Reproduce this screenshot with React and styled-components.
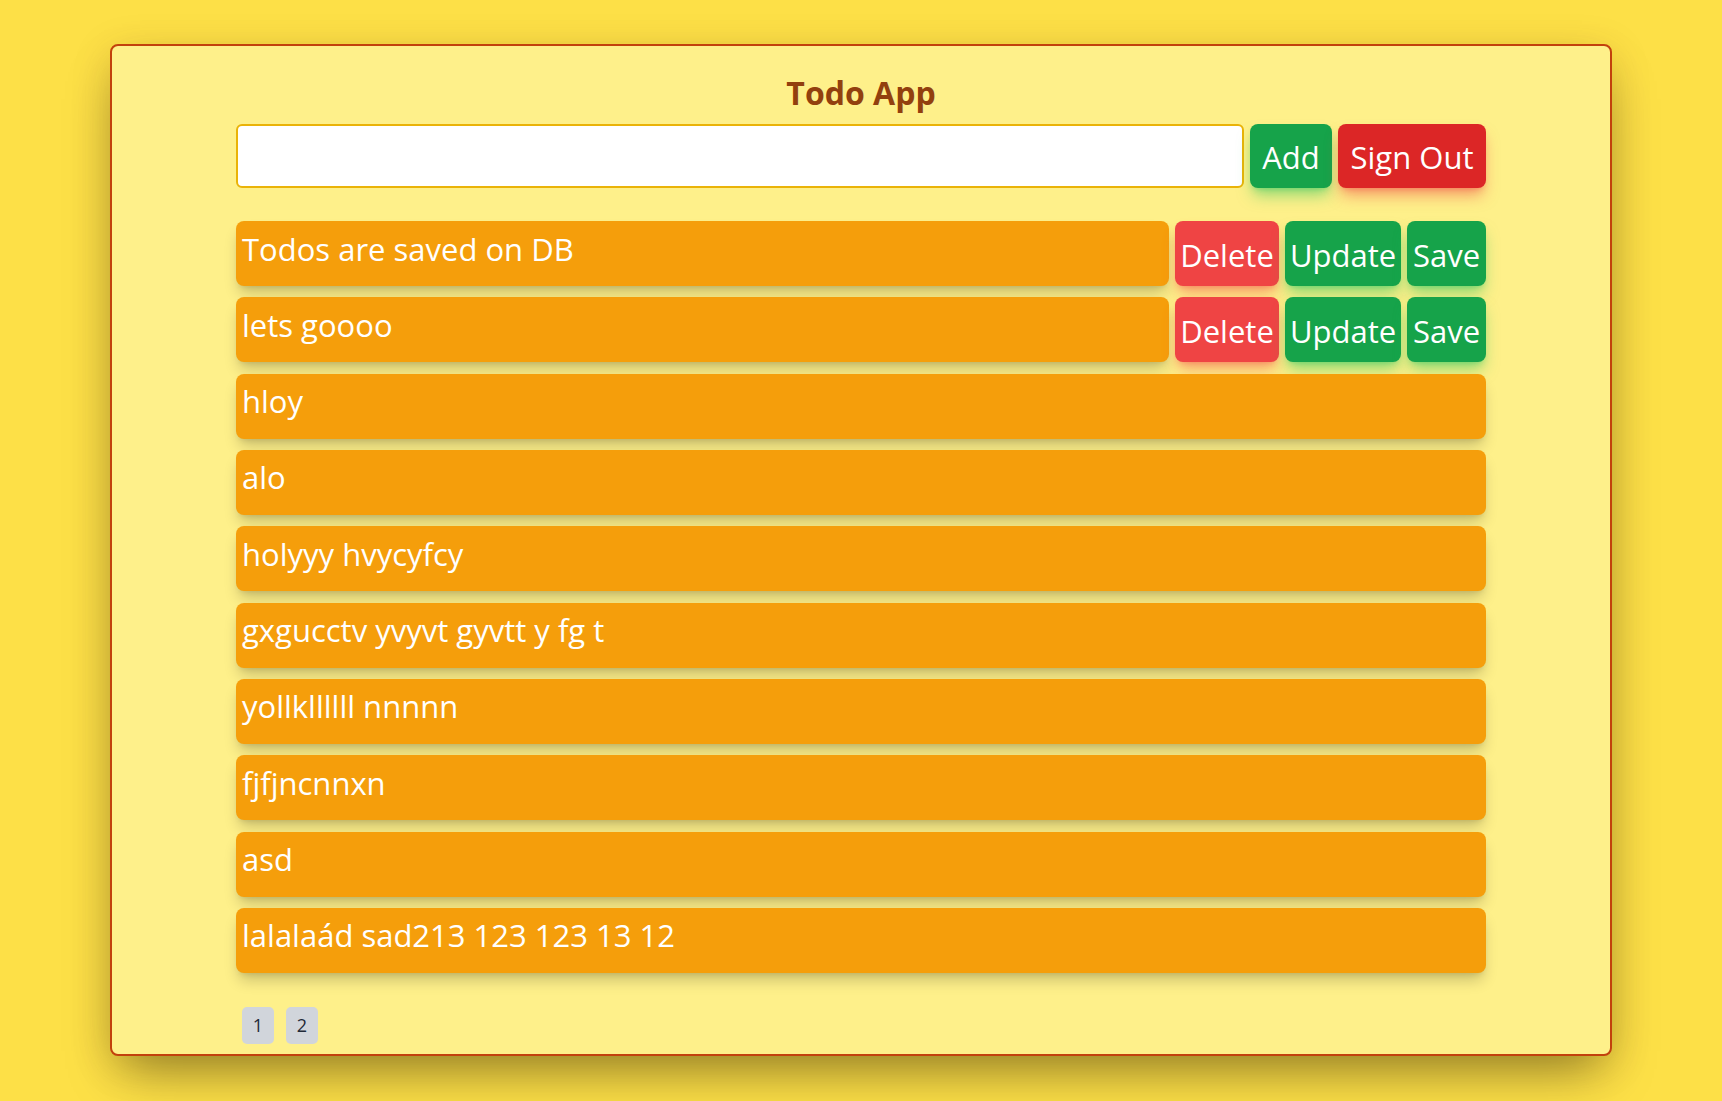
import React from "react";
import styled, { createGlobalStyle } from "styled-components";

const GlobalStyle = createGlobalStyle`
  html, body { margin: 0; padding: 0; }
  body {
    background: #fde047;
    min-height: 100vh;
    font-family: "Open Sans", "Noto Sans", "Liberation Sans", sans-serif;
  }
  * { box-sizing: border-box; }
`;

const Card = styled.div`
  width: 1502px;
  margin: 44px auto 0;
  background: #fef08a;
  border: 2px solid #c2410c;
  border-radius: 8px;
  padding: 27px 0 10px;
  box-shadow: 0 25px 50px -12px rgba(0, 0, 0, 0.4), 0 8px 40px rgba(120, 60, 0, 0.15);
`;

const Title = styled.h1`
  margin: 0;
  text-align: center;
  font-size: 32px;
  line-height: 40px;
  font-weight: 700;
  color: #92400e;
`;

const Content = styled.div`
  width: 1250px;
  margin: 0 auto;
`;

const InputRow = styled.div`
  display: flex;
  gap: 6px;
  margin-top: 11px;
  height: 64px;
`;

const TextInput = styled.input`
  flex: 1;
  height: 64px;
  border: 2px solid #eab308;
  border-radius: 6px;
  background: #fff;
  outline: none;
  font-family: inherit;
  font-size: 30px;
  padding: 0 8px;
`;

const tones = {
  green: { bg: "#16a34a", glow: "rgba(34, 197, 94, 0.5)" },
  red: { bg: "#dc2626", glow: "rgba(239, 68, 68, 0.5)" },
  lightRed: { bg: "#ef4444", glow: "rgba(239, 68, 68, 0.45)" },
};

const Button = styled.button`
  width: ${(p) => p.$w}px;
  flex: none;
  border: none;
  border-radius: 8px;
  padding: 3px 0 0;
  background: ${(p) => tones[p.$tone].bg};
  color: #fff;
  font-family: inherit;
  font-size: 31px;
  line-height: 1;
  display: flex;
  align-items: center;
  justify-content: center;
  white-space: nowrap;
  box-shadow: 0 10px 15px -3px ${(p) => tones[p.$tone].glow},
    0 4px 6px -4px ${(p) => tones[p.$tone].glow};
  cursor: pointer;
`;

const List = styled.div`
  display: flex;
  flex-direction: column;
  gap: 11.33px;
  margin-top: 33px;
`;

const Row = styled.div`
  display: flex;
  gap: 6px;
  height: 65px;
`;

const TodoText = styled.div`
  flex: 1;
  background: #f59e0b;
  border-radius: 8px;
  color: #fff;
  font-size: 31px;
  line-height: 45px;
  padding: 5.5px 6px 0;
  white-space: nowrap;
  box-shadow: 0 10px 15px -3px rgba(0, 0, 0, 0.2), 0 4px 6px -4px rgba(0, 0, 0, 0.15);
`;

const Pagination = styled.div`
  display: flex;
  gap: 12px;
  margin: 34px 0 0 6px;
`;

const PageButton = styled.button`
  width: 32px;
  height: 37px;
  border: none;
  border-radius: 5px;
  background: #d1d5db;
  color: #1f2937;
  font-family: inherit;
  font-size: 18px;
  padding: 0;
  cursor: pointer;
`;

const todos = [
  { text: "Todos are saved on DB", actions: true },
  { text: "lets goooo", actions: true },
  { text: "hloy" },
  { text: "alo" },
  { text: "holyyy hvycyfcy" },
  { text: "gxgucctv yvyvt gyvtt y fg t" },
  { text: "yollkllllll nnnnn" },
  { text: "fjfjncnnxn" },
  { text: "asd" },
  { text: "lalalaád sad213 123 123 13 12" },
];

export default function App() {
  return (
    <>
      <GlobalStyle />
      <Card>
        <Title>Todo App</Title>
        <Content>
          <InputRow>
            <TextInput type="text" />
            <Button $tone="green" $w={82}>Add</Button>
            <Button $tone="red" $w={148}>Sign Out</Button>
          </InputRow>
          <List>
            {todos.map((t, i) => (
              <Row key={i}>
                <TodoText>{t.text}</TodoText>
                {t.actions && (
                  <>
                    <Button $tone="lightRed" $w={104}>Delete</Button>
                    <Button $tone="green" $w={116}>Update</Button>
                    <Button $tone="green" $w={79}>Save</Button>
                  </>
                )}
              </Row>
            ))}
          </List>
          <Pagination>
            <PageButton>1</PageButton>
            <PageButton>2</PageButton>
          </Pagination>
        </Content>
      </Card>
    </>
  );
}
